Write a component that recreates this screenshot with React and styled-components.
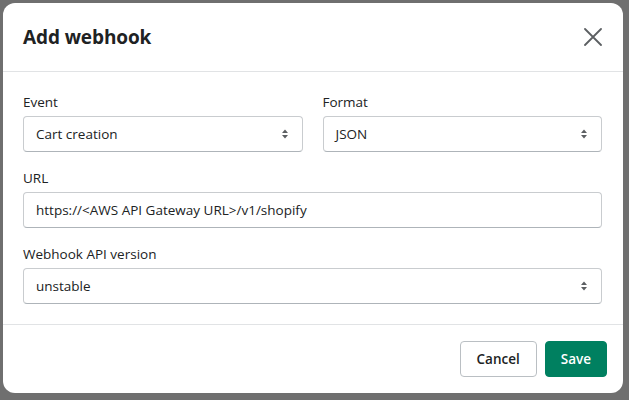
import styled, { createGlobalStyle } from "styled-components";

const GlobalStyle = createGlobalStyle`
  html, body {
    margin: 0;
    padding: 0;
    background: #6f6f6f;
  }
  body {
    font-family: "Open Sans", "Noto Sans", sans-serif;
    color: #202223;
  }
  * {
    box-sizing: border-box;
  }
`;

const SelectArrows = () => (
  <svg width="8" height="12" viewBox="0 0 8 12">
    <path d="M4 1.5 L7 5 H1 Z" fill="#5c5f62" />
    <path d="M4 10.5 L7 7 H1 Z" fill="#5c5f62" />
  </svg>
);

const CloseIcon = () => (
  <svg width="18" height="18" viewBox="0 0 18 18">
    <path
      d="M1 1 L17 17 M17 1 L1 17"
      stroke="#5c5f62"
      strokeWidth="1.8"
      strokeLinecap="round"
    />
  </svg>
);

const SelectField = ({ label, value }) => (
  <Field>
    <Label>{label}</Label>
    <Box>
      <BoxText>{value}</BoxText>
      <SelectArrows />
    </Box>
  </Field>
);

const App = () => {
  return (
    <>
      <GlobalStyle />
      <Backdrop>
        <Modal>
          <Header>
            <Title>Add webhook</Title>
            <CloseButton aria-label="Close">
              <CloseIcon />
            </CloseButton>
          </Header>

          <Body>
            <Row>
              <SelectField label="Event" value="Cart creation" />
              <SelectField label="Format" value="JSON" />
            </Row>

            <Field>
              <Label>URL</Label>
              <Box>
                <BoxText>https://&lt;AWS API Gateway URL&gt;/v1/shopify</BoxText>
              </Box>
            </Field>

            <SelectField label="Webhook API version" value="unstable" />
          </Body>

          <Footer>
            <Button>Cancel</Button>
            <Button primary>Save</Button>
          </Footer>
        </Modal>
      </Backdrop>
    </>
  );
};

const Backdrop = styled.div`
  width: 629px;
  height: 400px;
  padding: 3px 6px 7px 3px;
  background: #6f6f6f;
`;

const Modal = styled.div`
  width: 620px;
  height: 390px;
  background: #ffffff;
  border-radius: 12px;
  display: flex;
  flex-direction: column;
  overflow: hidden;
`;

const Header = styled.div`
  height: 69px;
  padding: 0 20px;
  display: flex;
  align-items: center;
  justify-content: space-between;
  border-bottom: 1px solid #e1e3e5;
`;

const Title = styled.h2`
  margin: 0;
  font-size: 19px;
  font-weight: 700;
  letter-spacing: -0.1px;
  color: #202223;
`;

const CloseButton = styled.button`
  border: none;
  background: none;
  padding: 0;
  margin-right: 1px;
  display: flex;
  cursor: pointer;
`;

const Body = styled.div`
  flex: 1;
  padding: 20px 21px 20px 20px;
  display: flex;
  flex-direction: column;
  gap: 16px;
  border-bottom: 1px solid #e1e3e5;
`;

const Row = styled.div`
  display: grid;
  grid-template-columns: 1fr 1fr;
  gap: 20px;
`;

const Field = styled.div`
  display: flex;
  flex-direction: column;
  gap: 4px;
`;

const Label = styled.label`
  font-size: 13.5px;
  line-height: 20px;
  color: #202223;
`;

const Box = styled.div`
  height: 36px;
  padding: 0 13px 0 12px;
  display: flex;
  align-items: center;
  justify-content: space-between;
  border: 1px solid #c9cccf;
  border-bottom-color: #aeb4b9;
  border-radius: 4px;
  background: #ffffff;
`;

const BoxText = styled.span`
  font-size: 13.5px;
  color: #202223;
  white-space: nowrap;
`;

const Footer = styled.div`
  height: 68px;
  padding: 0 16px 0 20px;
  display: flex;
  align-items: center;
  justify-content: flex-end;
  gap: 8px;
`;

const Button = styled.button`
  height: 36px;
  padding: 0 ${({ primary }) => (primary ? "15px" : "16px")};
  border-radius: 4px;
  font-family: "Open Sans", "Noto Sans", sans-serif;
  font-size: 13.5px;
  font-weight: 600;
  cursor: pointer;
  color: ${({ primary }) => (primary ? "#ffffff" : "#202223")};
  background: ${({ primary }) => (primary ? "#008060" : "#ffffff")};
  border: 1px solid ${({ primary }) => (primary ? "#008060" : "#babfc3")};
  min-width: ${({ primary }) => (primary ? "62px" : "76px")};
`;

export default App;
